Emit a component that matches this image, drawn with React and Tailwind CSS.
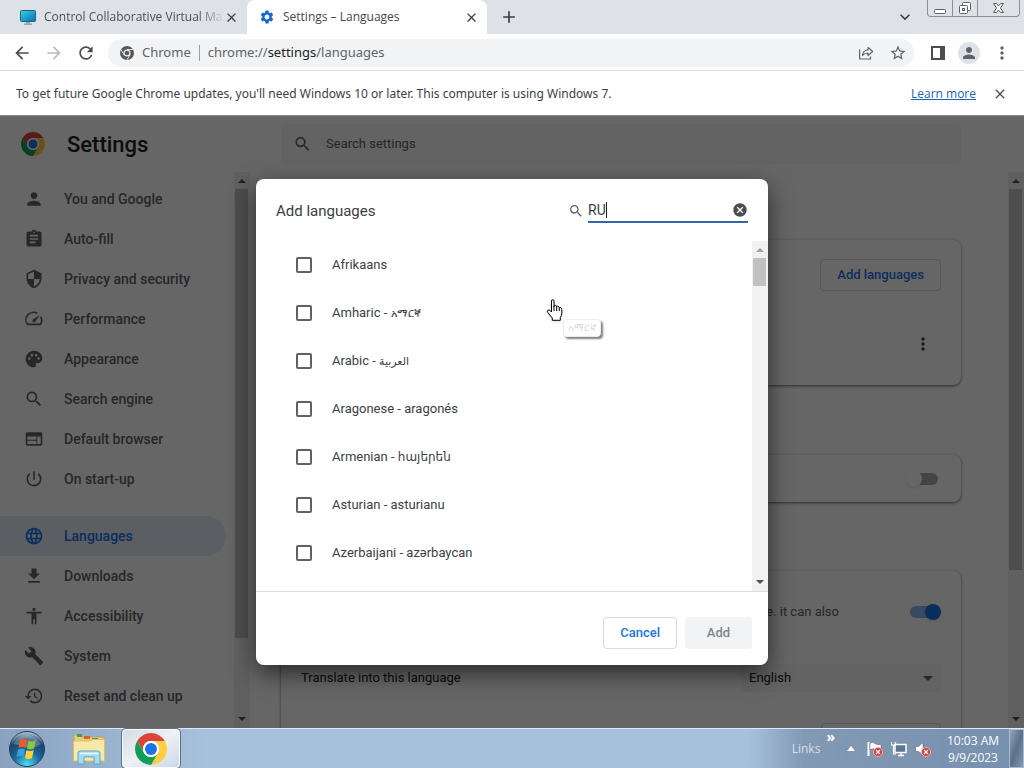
import { useState } from 'react'
import {
  MdAccessibility,
  MdAdd,
  MdArrowBack,
  MdArrowForward,
  MdAssignment,
  MdBuild,
  MdCancel,
  MdClose,
  MdExpandMore,
  MdFileDownload,
  MdLanguage,
  MdMoreVert,
  MdPalette,
  MdPerson,
  MdPowerSettingsNew,
  MdRefresh,
  MdRestore,
  MdSearch,
  MdSecurity,
  MdSettings,
  MdStarBorder,
  MdWeb,
} from 'react-icons/md'

function ChromeLogo({ size }) {
  return (
    <svg width={size} height={size} viewBox="0 0 48 48" aria-hidden="true">
      <path fill="#db4437" d="M24 12H44.78A24 24 0 0 0 3.22 12L13.6 30A12 12 0 0 1 24 12Z" />
      <path fill="#ffcd40" d="M34.4 30L24 48A24 24 0 0 0 44.78 12H24A12 12 0 0 1 34.4 30Z" />
      <path fill="#0f9d58" d="M13.6 30L3.22 12A24 24 0 0 0 24 48L34.4 30A12 12 0 0 1 13.6 30Z" />
      <circle cx="24" cy="24" r="12" fill="#fff" />
      <circle cx="24" cy="24" r="9" fill="#1a73e8" />
    </svg>
  )
}

function ChromeMark() {
  return (
    <svg width="14" height="14" viewBox="0 0 48 48" aria-hidden="true">
      <circle cx="24" cy="24" r="24" fill="#55585c" />
      <circle cx="24" cy="24" r="12" fill="#f1f3f4" />
      <path d="M24 12H46M13.6 30L2.6 11M34.4 30L23.4 49" stroke="#f1f3f4" strokeWidth="3" />
      <circle cx="24" cy="24" r="8" fill="#55585c" />
    </svg>
  )
}

function SpeedIcon() {
  return (
    <svg width="20" height="20" viewBox="0 0 24 24" fill="none" stroke="currentColor" strokeWidth="2" aria-hidden="true">
      <path d="M15.8 5.2A9 9 0 0 0 4.2 18.5H19.8A9 9 0 0 0 20 9.3" />
      <path d="M10.6 15.4A2 2 0 0 1 10.6 12.6L19 7L13.4 15.4A2 2 0 0 1 10.6 15.4Z" fill="currentColor" stroke="none" />
    </svg>
  )
}

const menu = [
  { label: 'You and Google', icon: MdPerson },
  { label: 'Auto-fill', icon: MdAssignment },
  { label: 'Privacy and security', icon: MdSecurity },
  { label: 'Performance', icon: SpeedIcon },
  { label: 'Appearance', icon: MdPalette },
  { label: 'Search engine', icon: MdSearch },
  { label: 'Default browser', icon: MdWeb },
  { label: 'On start-up', icon: MdPowerSettingsNew },
]

const advancedMenu = [
  { label: 'Languages', icon: MdLanguage, active: true },
  { label: 'Downloads', icon: MdFileDownload },
  { label: 'Accessibility', icon: MdAccessibility },
  { label: 'System', icon: MdBuild },
  { label: 'Reset and clean up', icon: MdRestore },
]

const languages = [
  { name: 'Afrikaans' },
  { name: 'Amharic', native: 'አማርኛ', size: 'text-[11px]' },
  { name: 'Arabic', native: 'العربية', size: 'text-[11px]' },
  { name: 'Aragonese', native: 'aragonés' },
  { name: 'Armenian', native: 'հայերեն', size: 'text-xs' },
  { name: 'Asturian', native: 'asturianu' },
  { name: 'Azerbaijani', native: 'azərbaycan' },
]

function Scrollbar({ size, dimTop }) {
  return (
    <div className="flex w-4 shrink-0 flex-col items-center bg-[#f1f1f1]" aria-hidden="true">
      <svg width="16" height="17" viewBox="0 0 16 17">
        <path d="M4 11L8 7L12 11Z" fill={dimTop ? '#a3a3a3' : '#505050'} />
      </svg>
      <div className="w-full flex-1 pr-0.5 pl-px">
        <div className="bg-[#c1c1c1]" style={{ height: `${size}%` }} />
      </div>
      <svg width="16" height="17" viewBox="0 0 16 17">
        <path d="M4 6L8 10L12 6Z" fill="#505050" />
      </svg>
    </div>
  )
}

function MenuItem({ item }) {
  const Icon = item.icon
  return (
    <a
      href="#"
      className={`mr-2 flex h-10 items-center gap-5 rounded-r-full pl-6 text-sm font-medium ${
        item.active ? 'bg-[#e3ebf8] text-[#1a73e8]' : 'text-[#5f6368]'
      }`}
    >
      <Icon size={20} />
      {item.label}
    </a>
  )
}

function Toggle({ label, checked }) {
  return (
    <input
      type="checkbox"
      role="switch"
      aria-label={label}
      defaultChecked={checked}
      className="relative mr-[3px] h-3 w-7 appearance-none rounded-full bg-[#a8abaf] before:absolute before:-top-0.5 before:-left-1 before:size-4 before:rounded-full before:bg-white before:shadow before:content-[''] checked:bg-[#8cb8f5] checked:before:left-[15px] checked:before:bg-[#1a73e8]"
    />
  )
}

function TabStrip() {
  return (
    <div className="flex h-[34px] shrink-0 bg-[#dee1e6] text-xs text-[#45484c]">
      <div className="flex w-[247px] items-center pr-2 pl-5">
        <svg width="16" height="16" viewBox="0 0 16 16" className="mr-2 shrink-0" aria-hidden="true">
          <defs>
            <linearGradient id="screen" x1="0" y1="0" x2="1" y2="1">
              <stop offset="0" stopColor="#32d2e0" />
              <stop offset="1" stopColor="#0b6fb4" />
            </linearGradient>
          </defs>
          <rect x="0.5" y="1.5" width="15" height="11" rx="1" fill="url(#screen)" stroke="#17628f" />
          <path d="M6 13H10V14.5H12V16H4V14.5H6Z" fill="#9aa7b0" />
        </svg>
        <span className="flex-1 bg-linear-to-r from-[#45484c] from-85% to-[#dee1e6] bg-clip-text whitespace-nowrap text-transparent">
          Control Collaborative Virtual Ma
        </span>
        <button aria-label="Close tab" className="shrink-0">
          <MdClose size={15} color="#3c4043" />
        </button>
      </div>
      <div className="flex w-[240px] items-center gap-2 rounded-t-lg bg-white pr-2 pl-3">
        <MdSettings size={16} color="#1a66d2" />
        <span className="flex-1">Settings – Languages</span>
        <button aria-label="Close tab">
          <MdClose size={15} color="#3c4043" />
        </button>
      </div>
      <button aria-label="New tab" className="ml-3">
        <MdAdd size={20} color="#3c4043" />
      </button>
      <div className="flex-1" />
      <button aria-label="Search tabs" className="mr-3">
        <MdExpandMore size={20} color="#3c4043" />
      </button>
      <div className="mr-1 flex h-[17px] rounded-b border border-t-0 border-[#8b9096]">
        <button aria-label="Minimise" className="flex w-[25px] items-center justify-center border-r border-[#8b9096]">
          <svg width="12" height="14" viewBox="0 0 12 14">
            <rect x="0.5" y="8.5" width="11" height="4" rx="1" fill="#fff" stroke="#5b6066" />
          </svg>
        </button>
        <button aria-label="Restore" className="flex w-[25px] items-center justify-center border-r border-[#8b9096]">
          <svg width="14" height="14" viewBox="0 0 14 14" fill="#fff" stroke="#5b6066">
            <rect x="4.5" y="1.5" width="8" height="8" rx="1" />
            <rect x="1.5" y="4.5" width="8" height="8" rx="1" />
            <rect x="4.5" y="7.5" width="2" height="2" />
          </svg>
        </button>
        <button aria-label="Close" className="flex w-[41px] items-center justify-center">
          <svg width="13" height="14" viewBox="0 0 13 14">
            <path
              d="M1.5 2.5H4.5L6.5 5L8.5 2.5H11.5L8.5 7L11.5 11.5H8.5L6.5 9L4.5 11.5H1.5L4.5 7Z"
              fill="#fff"
              stroke="#5b6066"
            />
          </svg>
        </button>
      </div>
    </div>
  )
}

function Toolbar() {
  return (
    <div className="flex h-[37px] shrink-0 items-center border-b border-[#dadce0] bg-white px-3 pt-px text-[#5f6368]">
      <button aria-label="Back" className="mr-3">
        <MdArrowBack size={20} color="#4a4d51" />
      </button>
      <button aria-label="Forward" className="mr-3">
        <MdArrowForward size={20} color="#babcbe" />
      </button>
      <button aria-label="Reload" className="mr-3">
        <MdRefresh size={20} color="#4a4d51" />
      </button>
      <div className="flex h-7 flex-1 items-center rounded-full bg-[#f1f3f4] pr-[7px] pl-3 font-['Noto_Sans',sans-serif] text-[13px]">
        <ChromeMark />
        <span className="ml-2">Chrome</span>
        <span className="mx-2 h-4 w-px bg-[#9aa0a6]" />
        <span className="flex-1">
          chrome://<span className="text-[#202124]">settings</span>/languages
        </span>
        <button aria-label="Share" className="mr-[15px]">
          <svg width="16" height="16" viewBox="0 0 16 16" fill="none" stroke="#5f6368" strokeWidth="1.2">
            <path d="M1.6 4.5V14H12.5V11.5" />
            <path d="M4.5 10.5C4.8 7 6.5 5.2 10 5V2.5L14.7 6.5L10 10.5V8C7.5 8 5.8 8.8 4.5 10.5Z" strokeLinejoin="round" />
          </svg>
        </button>
        <button aria-label="Bookmark this tab">
          <MdStarBorder size={18} />
        </button>
      </div>
      <button aria-label="Side panel" className="mr-3 ml-4">
        <svg width="16" height="16" viewBox="0 0 16 16">
          <path d="M1 1H15V15H1ZM3 3V13H10V3Z" fill="#4a4d51" fillRule="evenodd" />
        </svg>
      </button>
      <button aria-label="Profile" className="mr-3 flex size-[22px] items-center justify-center rounded-full bg-[#dee1e6]">
        <MdPerson size={18} />
      </button>
      <button aria-label="Menu">
        <MdMoreVert size={20} />
      </button>
    </div>
  )
}

function InfoBar() {
  return (
    <div className="flex h-[45px] shrink-0 items-center border-b border-[#8a8a8a] bg-white px-4 pt-px text-xs text-[#3c4043]">
      <p className="flex-1 font-['Noto_Sans',sans-serif]">
        To get future Google Chrome updates, you'll need Windows 10 or later. This computer is using Windows 7.
      </p>
      <a href="#" className="text-[#1a62b8] underline">
        Learn more
      </a>
      <button aria-label="Dismiss" className="ml-4">
        <MdClose size={16} color="#4a4d51" />
      </button>
    </div>
  )
}

const card = 'rounded-lg bg-white shadow-[0_1px_2px_rgba(60,64,67,0.5),0_1px_3px_1px_rgba(60,64,67,0.25)]'

function SettingsPage() {
  return (
    <div className="flex h-full flex-col bg-white">
      <header className="flex h-14 shrink-0 items-center">
        <div className="flex w-[281px] items-center gap-[22px] pl-[21px]">
          <ChromeLogo size={24} />
          <h1 className="text-[22px] font-medium text-[#202124]">Settings</h1>
        </div>
        <label className="mr-[63px] flex h-10 flex-1 items-center gap-3.5 rounded bg-[#f4f7f5] pl-3 text-[#5f6368]">
          <MdSearch size={20} />
          <input
            type="text"
            placeholder="Search settings"
            className="w-full bg-transparent text-[13px] outline-none placeholder:text-[#5f6368]"
          />
        </label>
      </header>
      <div className="flex min-h-0 flex-1">
        <div className="flex w-[250px] shrink-0">
          <nav className="flex-1 overflow-hidden pt-[7px]">
            {menu.map((item) => (
              <MenuItem key={item.label} item={item} />
            ))}
            <div className="h-[17px]" />
            {advancedMenu.map((item) => (
              <MenuItem key={item.label} item={item} />
            ))}
          </nav>
          <Scrollbar size={86} />
        </div>
        <main className="flex-1 overflow-hidden pr-[47px] pl-[31px] text-[13px] text-[#202124]">
          <section className={`${card} mt-[68px] pb-2`}>
            <div className="flex h-[70px] items-center justify-end pr-5">
              <button className="h-8 rounded border border-[#dadce0] px-4 font-medium text-[#1a73e8]">
                Add languages
              </button>
            </div>
            <div className="flex h-[67px] items-center justify-end pr-7">
              <button aria-label="More actions">
                <MdMoreVert size={20} color="#3c4043" />
              </button>
            </div>
          </section>
          <section className={`${card} mt-[70px] flex h-[47px] items-center justify-end pr-5`}>
            <Toggle label="Spell check" />
          </section>
          <section className={`${card} mt-[69px] h-[220px]`}>
            <div className="flex h-[81px] items-center justify-end pr-5">
              <span className="mr-[71px] text-[#5f6368]">language. it can also</span>
              <Toggle label="Use Google Translate" checked />
            </div>
            <div className="flex h-[51px] items-center justify-between px-5">
              <label htmlFor="target">Translate into this language</label>
              <div className="relative">
                <select id="target" className="h-7 w-[200px] appearance-none rounded bg-[#f4f7f5] px-2">
                  <option>English</option>
                </select>
                <svg width="10" height="5" viewBox="0 0 10 5" className="absolute top-3 right-2">
                  <path d="M0 0H10L5 5Z" fill="#5f6368" />
                </svg>
              </div>
            </div>
            <div className="flex justify-end pt-5 pr-5">
              <button aria-label="Add languages" className="h-8 w-[120px] rounded border border-[#dadce0]" />
            </div>
          </section>
        </main>
        <Scrollbar size={73} />
      </div>
    </div>
  )
}

function HandCursor() {
  return (
    <svg width="18" height="23" viewBox="0 0 18 23" className="drop-shadow" aria-hidden="true">
      <path
        d="M5.5 2Q5.5 0.7 6.7 0.7Q8 0.7 8 2V7.5Q8.3 6.3 9.4 6.4Q10.6 6.5 10.7 7.8Q11.2 7 12.2 7.3Q13.3 7.7 13.3 8.8Q14 8.3 14.9 8.8Q15.8 9.4 15.8 10.7V14Q15.8 16.5 14.3 18.3V21.3H6.3V19L1.8 13.5Q0.8 12 1.9 11.2Q3 10.5 4.2 11.7L5.5 13Z"
        fill="#fff"
        stroke="#000"
      />
      <path d="M8 7V12M10.7 8V12M13.3 9V12" stroke="#000" />
    </svg>
  )
}

function AddLanguagesDialog() {
  const [query, setQuery] = useState('RU')

  return (
    <div
      role="dialog"
      aria-labelledby="dialog-title"
      className="relative flex w-lg flex-col overflow-hidden rounded-lg bg-white text-[13px] text-[#3c4043]"
    >
      <div className="flex h-[62px] items-center px-5 pt-0.5">
        <h2 id="dialog-title" className="flex-1 text-[15px]">
          Add languages
        </h2>
        <MdSearch size={16} color="#5f6368" className="mr-1" />
        <div className="flex h-6 w-40 items-center border-b-2 border-[#3367a8]">
          <div className="flex min-w-0 flex-1 items-center">
            <input
              type="text"
              aria-label="Search languages"
              value={query}
              onChange={(e) => setQuery(e.target.value)}
              className="field-sizing-content text-sm outline-none"
            />
            <span className="h-4 w-px bg-[#202124]" />
          </div>
          <button aria-label="Clear search" onClick={() => setQuery('')}>
            <MdCancel size={16} color="#4a4d51" />
          </button>
        </div>
      </div>
      <div className="flex h-[351px] border-b border-[#dadce0]">
        <ul className="flex-1 overflow-hidden">
          {languages.map(({ name, native, size }) => (
            <li key={name}>
              <label className="flex h-12 items-center gap-5 pl-10">
                <input
                  type="checkbox"
                  className="size-4 appearance-none rounded-xs border-2 border-[#5f6368] checked:bg-[#1a73e8]"
                />
                <span>
                  {name}
                  {native && ' - '}
                  {native && <span className={size}>{native}</span>}
                </span>
              </label>
            </li>
          ))}
        </ul>
        <Scrollbar size={9} dimTop />
      </div>
      <div className="flex h-[73px] items-center justify-end gap-2 pt-2 pr-4 font-medium">
        <button className="h-8 rounded border border-[#dadce0] px-4 text-[#1a73e8]">Cancel</button>
        <button disabled className="h-8 w-[67px] rounded bg-[#f1f3f4] text-[#80868b]">
          Add
        </button>
      </div>
      {/* pointer and the tooltip that follows it */}
      <div className="absolute top-[140px] left-[307px] rounded-sm border border-[#ececec] bg-white px-1 text-[10px] leading-4 text-[#dcdcdc] shadow-[2px_2px_2px_rgba(0,0,0,0.5)]">
        አማርኛ
      </div>
      <div className="absolute top-[120px] left-[290px]">
        <HandCursor />
      </div>
    </div>
  )
}

function RedCross({ x, y }) {
  return (
    <g>
      <circle cx={x} cy={y} r="4.5" fill="#d9362b" stroke="#f3b5ae" />
      <path d={`M${x - 2} ${y - 2}L${x + 2} ${y + 2}M${x + 2} ${y - 2}L${x - 2} ${y + 2}`} stroke="#fff" strokeWidth="1.5" />
    </g>
  )
}

function Taskbar() {
  return (
    <footer className="flex h-10 shrink-0 items-center border-t border-[#dfe9f5] bg-linear-to-r from-[#8aa2bf] via-[#a7c1dd] via-20% to-[#a7c1dd] text-xs text-white">
      <button aria-label="Start" className="ml-2">
        <svg width="38" height="38" viewBox="0 0 38 38">
          <defs>
            <radialGradient id="orb" cx="0.5" cy="0.95" r="0.9">
              <stop offset="0" stopColor="#4fe0f0" />
              <stop offset="0.45" stopColor="#17669c" />
              <stop offset="0.8" stopColor="#1d446b" />
              <stop offset="1" stopColor="#9db6cc" />
            </radialGradient>
          </defs>
          <circle cx="19" cy="19" r="17.5" fill="url(#orb)" stroke="#25405e" />
          <path d="M5 14Q19 -4 33 14Q26 19 19 17Q12 15 5 14Z" fill="#fff" opacity="0.25" />
          <path d="M12 10Q15.5 7.5 19 10L17.5 18Q14 16 10.5 18Z" fill="#ee5a24" />
          <path d="M20.5 10.5Q24 12.5 28 10L26 18.5Q22.5 20.5 19 18.5Z" fill="#8cc63f" />
          <path d="M10 19.5Q13.5 17.5 17 19.5L15.5 27Q12 25 8.5 27Z" fill="#3d9be0" />
          <path d="M18.5 20Q22 22 25.8 20L24 28Q20.5 30 17 28Z" fill="#fdd231" />
        </svg>
      </button>
      <button aria-label="Windows Explorer" className="ml-[26px]">
        <svg width="34" height="32" viewBox="0 0 34 32">
          <path d="M2 3Q2 2 3 2H9L10 4H32V28H2Z" fill="#e9cf73" stroke="#c5a24a" />
          <path d="M5 1H10V4H5Z" fill="#3fa34d" />
          <path d="M12 3H18V6H12Z" fill="#d9623b" />
          <path d="M20 5H26V8H20Z" fill="#4c87c7" />
          <path d="M1.5 8H19L20 6.5H32.5V28H1.5Z" fill="#f8e9a6" stroke="#dcc06a" />
          <path d="M6 31V20Q6 18 8 18H26Q28 18 28 20V31H22V24H12V31Z" fill="#a6dcf3" stroke="#5aa6cf" />
          <path d="M8 20.5H26" stroke="#e8f8ff" strokeWidth="1.5" />
        </svg>
      </button>
      <button
        aria-label="Google Chrome"
        className="ml-4 flex h-full w-[58px] items-center justify-center rounded border border-white bg-linear-to-br from-[#d3dce6] via-[#eef1f5] to-[#c9d8e8] shadow-[0_0_0_1px_#5c6f85]"
      >
        <ChromeLogo size={32} />
      </button>
      <div className="flex-1" />
      <div className="flex h-full items-center bg-linear-to-r from-[#a7c1dd] via-[#8299b4] via-20% to-[#7690ae] pl-11">
        <span className="text-[#d5dfea]">Links</span>
        <span className="ml-1.5 self-start text-sm leading-4 font-bold">»</span>
        <svg width="8" height="5" viewBox="0 0 8 5" className="ml-3">
          <path d="M0 5L4 0L8 5Z" fill="#fff" />
        </svg>
        <div className="ml-3 flex gap-2">
          <svg width="16" height="16" viewBox="0 0 16 16">
            <path d="M1.5 1V15" stroke="#fff" strokeWidth="2" />
            <path d="M3 2Q6 0.5 8 2.5T14 3V9Q11 10 8.5 8.5T3 9Z" fill="#fff" stroke="#46566a" strokeWidth="0.5" />
            <RedCross x={11} y={11} />
          </svg>
          <svg width="16" height="16" viewBox="0 0 16 16">
            <rect x="4" y="3.5" width="11" height="8" fill="#5d7691" stroke="#fff" strokeWidth="1.5" />
            <path d="M7 14.5H13M10 12V14" stroke="#fff" strokeWidth="1.5" />
            <path d="M0.5 1V4H4.5V1M2.5 4V13H5" fill="none" stroke="#fff" strokeWidth="1.2" />
          </svg>
          <svg width="16" height="16" viewBox="0 0 16 16">
            <path d="M0.5 5.5H3.5L8 1.5V14L3.5 10.5H0.5Z" fill="#fff" stroke="#46566a" strokeWidth="0.5" />
            <RedCross x={11} y={11} />
          </svg>
        </div>
        <div className="mr-[5px] ml-[11px] w-[62px] text-center leading-[17px] whitespace-nowrap">
          10:03 AM
          <br />
          9/9/2023
        </div>
        <button
          aria-label="Show desktop"
          className="h-full w-[15px] border border-[#a9bacd] bg-linear-to-br from-[#93a5ba] via-[#5c7088] to-[#8499b2]"
        />
      </div>
    </footer>
  )
}

export default function App() {
  return (
    <div className="flex h-screen flex-col overflow-hidden bg-white font-['Open_Sans','Noto_Sans',sans-serif]">
      <TabStrip />
      <Toolbar />
      <InfoBar />
      <div className="relative min-h-0 flex-1 font-[Roboto,'DejaVu_Sans',sans-serif]">
        <SettingsPage />
        <div className="absolute inset-0 flex items-center justify-center bg-black/60">
          <div className="rounded-lg shadow-[0_8px_24px_rgba(0,0,0,0.6)]">
            <AddLanguagesDialog />
          </div>
        </div>
      </div>
      <Taskbar />
    </div>
  )
}
